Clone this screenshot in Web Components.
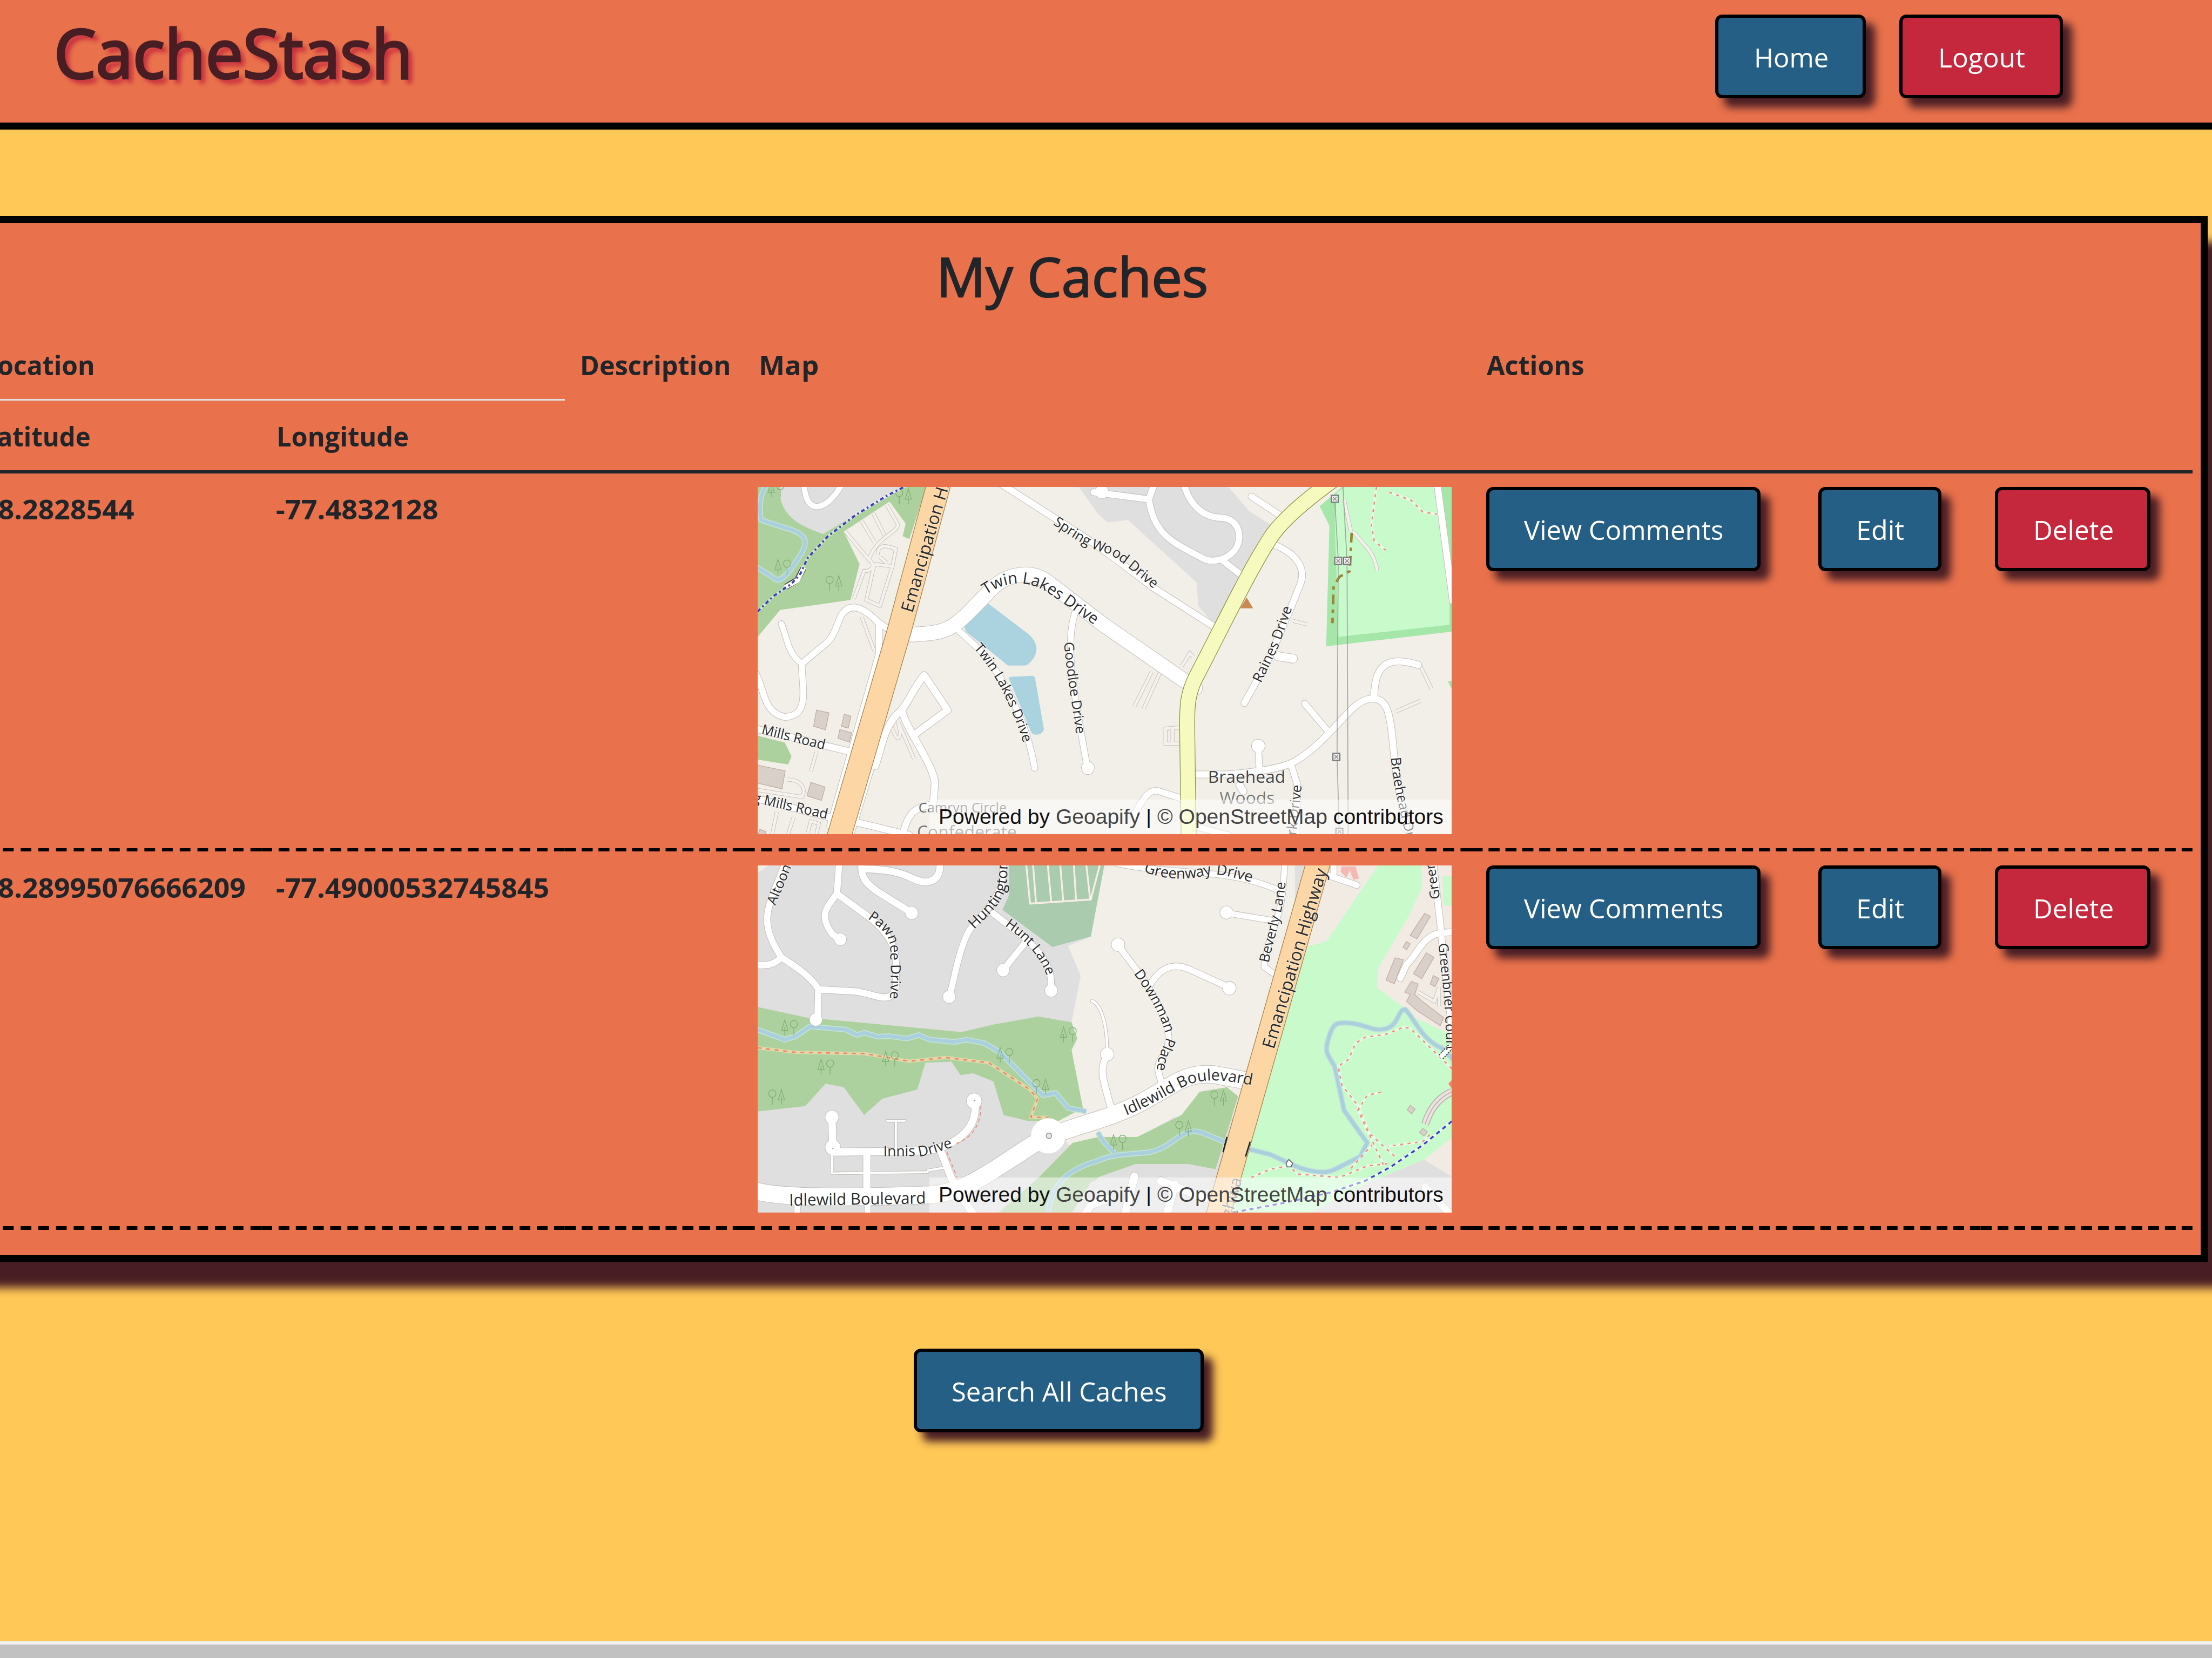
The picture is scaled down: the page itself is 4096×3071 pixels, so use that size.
<!DOCTYPE html>
<html lang="en">
<head>
<meta charset="utf-8">
<title>CacheStash</title>
<style>
  html { font-size: 73.142857px; }
  body { margin: 0; width: 4096px; height: 3071px; overflow: hidden; background: #ffc857; font-family: "Open Sans", "Noto Sans", sans-serif; color: #212529; }
</style>
</head>
<body>
<cache-app></cache-app>
<script>
const define = (name, html, after) => {
  const t = document.createElement('template');
  t.innerHTML = html;
  customElements.define(name, class extends HTMLElement {
    constructor() {
      super();
      this.attachShadow({ mode: 'open' }).appendChild(t.content.cloneNode(true));
    }
    connectedCallback() { if (after) after.call(this, this.shadowRoot); }
  });
};

/* Single line of text squeezed or stretched to an exact advance width (w, hundredths of a rem). */
define('fit-text', `
  <style>
    :host { display: inline-block; white-space: nowrap; text-align: left; }
    span { display: inline-block; transform-origin: 0 50%; }
  </style><span><slot></slot></span>`, function (root) {
  const w = this.getAttribute('w') * 0.73142857;
  const span = root.querySelector('span');
  this.style.width = w + 'px';
  const natural = span.offsetWidth;
  const exact = span.getBoundingClientRect().width || natural;
  span.style.transform = `scaleX(${w / exact})`;
});

define('stash-button', `
  <style>
    :host { display: inline-block; flex: none; }
    button { all: unset; box-sizing: border-box; display: flex; justify-content: center; align-items: center; width: 100%; height: 2.12rem;
      background: #255f85; color: #fff; border: 6.5px solid #000; border-radius: .18rem; font-size: .685rem; line-height: 1.054rem; padding: .02rem 0 0 .03rem;
      box-shadow: .22rem .22rem .22rem #481d24; }
    :host([danger]) button { background: #c5283d; }
  </style><button><slot></slot></button>`);

define('site-header', `
  <style>
    :host { display: flex; box-sizing: border-box; height: 240px; flex: none; background: #e9724c; border-bottom: 13px solid #000;
      justify-content: space-between; align-items: flex-start; padding: .37rem 3.78rem 0 1.37rem; }
    h1 { margin: .045rem 0 0; font-weight: 500; font-size: 1.7rem; line-height: 1.84rem; color: #481d24; -webkit-text-stroke: .035em #481d24; text-shadow: .12rem .12rem .12rem #c5283d; }
    nav { display: flex; gap: .85rem; }
  </style>
  <h1><fit-text w="908">CacheStash</fit-text></h1>
  <nav>
    <stash-button style="width:3.82rem"><fit-text w="189">Home</fit-text></stash-button>
    <stash-button danger style="width:4.13rem"><fit-text w="220">Logout</fit-text></stash-button>
  </nav>`);

/* ---------- map drawing ---------- */
const LW = 'translate(0 0) scale(.57398 .58673)', RW = 'scale(.58673 .58673)';
const tree = (x, y, flip) => `<g transform="translate(${x} ${y}) scale(${flip ? -1 : 1} 1)" fill="none" stroke="#7fae74" stroke-width="3">
  <path d="M-20,-30 L-34,15 H-6Z M-20,0 V36 M20,5 V36"/><circle cx="20" cy="-12" r="16"/></g>`;
const sq = (x, y) => `<rect x="${x - 15}" y="${y - 15}" width="30" height="30" fill="#eee" stroke="#777" stroke-width="5"/><path d="M${x - 8},${y - 8} l16,16 m0,-16 l-16,16" stroke="#777" stroke-width="3"/>`;
const bld = d => `<path d="${d}" fill="#d9d0c9" stroke="#c0aca3" stroke-width="3"/>`;
const foot = d => `<path d="${d}" fill="none" stroke="#fff" stroke-opacity=".45" stroke-width="12"/><path d="${d}" fill="none" stroke="#f3897a" stroke-width="6" stroke-dasharray="13 19"/>`;
const stream = d => `<path d="${d}" fill="none" stroke="#c5e2da" stroke-width="24" stroke-linejoin="round"/><path d="${d}" fill="none" stroke="#aad0de" stroke-width="16" stroke-linejoin="round"/>`;
const svc = d => `<path d="${d}" fill="none" stroke="#c9c3be" stroke-width="17"/><path d="${d}" fill="none" stroke="#f5f2ee" stroke-width="12"/>`;
const place = (o, s, c) => `<g transform="translate(${o[0]} ${o[1]}) ${s}">${c}</g>`;
let uid = 0;
const label = ([text, size, d, color]) => { const id = 'p' + (uid++);
  return `<path id="${id}" d="${d}" fill="none"/><text font-size="${size}" fill="${color || '#2b2b2b'}" stroke="#fff" stroke-opacity=".5" stroke-width="5" paint-order="stroke"><textPath href="#${id}">${text}</textPath></text>`; };

const MAPS = {
  lakes: {
    top: -21.8, bg: '#f2efe9',
    L: `<path fill="#add19e" d="M30,0 H786 L700,262 670,250 683,195 612,100 410,230 480,370 440,525 130,568 30,685Z"/>
      <path fill="#e0dfdf" d="M130,30 C120,120 160,190 320,240 C400,190 560,110 690,30Z"/>
      ${stream('M70,30 C40,70 35,120 45,180 L180,222 C262,250 250,290 200,360 C170,400 130,465 95,425 L20,380')}
      ${tree(140, 380)}${tree(368, 450, 1)}${tree(110, 45)}${tree(675, 75, 1)}
      <path fill="#add19e" d="M20,1108 L150,1140 L180,1200 L165,1235 L20,1212Z"/>
      ${bld('M290,1000 L345,1012 330,1085 277,1070Z')}${bld('M412,1018 L442,1026 430,1078 400,1070Z')}${bld('M393,1084 L445,1098 435,1138 384,1122Z')}
      ${bld('M20,1236 L152,1262 138,1340 20,1313Z')}${bld('M265,1312 L328,1332 312,1390 248,1370Z')}${bld('M40,1515 L68,1525 62,1545 30,1545Z')}
      ${svc('M420,232 L520,350 C560,250 640,240 650,200 L600,115 M490,185 L545,275 M540,150 L590,245 M520,350 C550,370 540,400 500,400 L455,520 M560,330 C560,280 600,290 640,305 L625,380 L570,550 L510,525 L545,370 L630,380 M570,340 L600,365')}
      ${svc('M490,600 L545,745 M620,1070 C640,1120 650,1140 660,1100 L650,1050 L720,1210 M290,1180 L265,1265 M160,1300 C220,1300 250,1340 225,1375 L30,1345 M115,1440 L95,1535 M190,1460 L165,1535 M250,1535 L265,1480 L300,1490 L290,1535')}
      <path fill="#aad3df" d="M1045,538 L1225,672 C1270,710 1275,760 1222,803 Q1215,808 1205,808 L1138,808 Q1130,806 1120,796 L950,662 C938,640 945,625 962,612Z M1138,862 Q1140,857 1150,856 L1240,852 Q1250,852 1254,862 L1293,1082 C1290,1106 1250,1114 1238,1098Z"/>`,
    R: `<path fill="#e0dfdf" d="M-90,30 L0,155 L40,190 L128,180 L425,450 L430,550 L500,630 L620,420 L750,205 L650,140 L555,30Z"/>
      <path fill="#a5e6a9" d="M955,120 L1060,30 H1540 V660 L983,725 L997,205Z"/><path fill="#c8facc" d="M1075,30 H1450 L1515,520 V632 L1036,684 L1020,180 L1030,60Z"/><path fill="#aadfae" d="M1508,876 L1540,870 V940Z"/>
      ${foot('M1200,37 L1178,200 L1190,270 L1240,310 M1255,60 L1350,95 L1400,145 L1460,155')}
      ${svc('M1060,90 L1090,230 M1100,230 L1160,300 Q1195,340 1203,400')}
      <path d="M1093,235 L1088,330 L1085,400 L1040,425 L1015,470 L1010,625" fill="none" stroke="#a08432" stroke-width="11" stroke-dasharray="42 22 14 22"/>
      ${svc('M230,835 L155,985 M265,840 L195,995 M360,810 L395,755 L410,770 M350,1075 L290,1080 V1145 H350 M320,1080 V1145 M840,615 L900,630 M1390,810 L1438,910 M1285,1005 L1390,960')}
      <path fill="#c98b53" d="M640,514 L668,561 H612Z"/>`,
    roads: [
      ['L', 27, 'M620,660 L560,620 C500,560 440,530 400,590 C370,650 370,690 310,730 L225,800 C225,900 265,1025 150,1030 C50,1010 60,900 20,840'],
      ['L', 25, 'M135,628 C165,700 160,750 225,800'], ['L', 27, 'M565,640 L565,760 L350,1500'], ['L', 24, 'M235,20 C240,170 340,140 405,20'],
      ['L', 30, 'M550,1240 C580,1150 590,1060 665,1000 C700,960 720,900 765,850 L868,1000 L730,1100'], ['L', 30, 'M550,1180 L440,1535'],
      ['L', 30, 'M665,1000 C690,1090 815,1250 812,1320 L805,1400'], ['L', 28, 'M440,1478 L700,1540 M670,1540 C690,1450 720,1420 800,1408'],
      ['L', 26, 'M920,660 L1010,740 C1120,860 1220,1060 1252,1250'], ['L', 26, 'M1430,580 C1385,720 1420,900 1485,1250'], ['Lc', 27, 1487, 1250],
      ['L', 28, 'M1090,15 L1370,190 C1500,270 1560,310 1773,470 L2060,650'], ['L', 28, 'M20,1080 L440,1180 M20,1380 L355,1465'],
      ['R', 27, 'M-20,60 L215,90 M243,20 L218,90 C240,250 330,280 460,350 C520,370 608,330 608,250 C605,190 560,170 530,170 C450,170 390,110 368,20 M530,350 L620,420'], ['Rc', 28, 15, 58],
      ['R', 26, 'M660,78 L800,170'], ['R', 27, 'M755,285 C870,330 895,400 870,460 L830,560 L740,770 L630,970'], ['R', 36, 'M775,768 L840,778'],
      ['R', 28, 'M400,1278 H560 C700,1265 800,1250 850,1220 C950,1160 1000,1090 1100,990 C1170,930 1230,940 1250,1010 C1275,1100 1270,1200 1290,1300 L1325,1500'], ['Rc', 18, 1325, 1508],
      ['R', 28, 'M1190,950 C1190,800 1250,765 1380,805'], ['R', 26, 'M890,972 L990,1090 M690,1160 L695,1255'], ['Rc', 28, 690, 1155],
      ['R', 26, 'M830,1230 L858,1320 L855,1560'], ['R', 26, 'M150,1460 C200,1370 220,1340 260,1350 L370,1385 M410,1500 L560,1540'], ['R', 30, 'M610,1325 L625,1350'],
      ['R', 28, 'M1462,20 L1530,530'],
      ['L', 62, 'M650,675 C860,675 880,650 950,590 L1050,490 C1110,420 1220,390 1300,440 L1560,635 L1960,905'],
      ['R', 62, 'M1010,10 C900,90 790,180 740,260 C650,400 560,590 420,860 C385,930 383,980 383,1070 L390,1560', '#f7fabf', '#8c9440'],
      ['L', 102, 'M836,0 L657,650 L385,1560', '#fcd6a4', '#a8824a'],
    ],
    overL: `<path d="M155,468 L205,438 L232,388" stroke="#444" stroke-width="26" fill="none"/><path d="M152,470 L207,440 L234,384" stroke="#fff" stroke-width="20" fill="none"/>
      <path d="M30,575 L100,508 L180,455 L220,410 L250,345 L340,250 L460,160 L600,75 L690,30" fill="none" stroke="#fff" stroke-opacity=".4" stroke-width="12"/><path d="M30,575 L100,508 L180,455 L220,410 L250,345 L340,250 L460,160 L600,75 L690,30" fill="none" stroke="#3a40b8" stroke-width="9" stroke-dasharray="17 12 8 12"/>`,
    overR: `<path d="M1020,90 L1035,355 L1030,1200 L1040,1550 M1055,30 L1073,355 L1078,1550" fill="none" stroke="#8a8a8a" stroke-opacity=".7" stroke-width="4"/>${sq(1020, 88)}${sq(1035, 356)}${sq(1073, 356)}${sq(1027, 1202)}${sq(1040, 1525)}`,
    labelsL: [['Emancipation Highway', 76, 'M713,583 L890,-20 L1000,-400'], ['Twin Lakes Drive', 69, 'M1038,503 C1120,445 1220,430 1320,500 C1400,550 1460,600 1560,660'],
      ['Twin Lakes Drive', 60, 'M983,733 C1080,840 1150,980 1210,1165'], ['Goodloe Drive', 60, 'M1382,708 C1390,820 1415,960 1440,1140'],
      ['Spring Wood Drive', 61, 'M1332,198 C1440,270 1500,310 1580,325 C1660,370 1720,440 1850,530'], ['Mills Road', 60, 'M45,1102 L400,1190'],
      ['g Mills Road', 60, 'M8,1397 L400,1485'], ['Camryn Circle', 60, 'M740,1443 H1200', '#666'], ['Confederate', 76, 'M733,1555 H1300', '#777']],
    labelsR: [['Raines Drive', 61, 'M702,885 L780,720 L850,520'], ['Braehead', 74, 'M473,1314 H900', '#444'], ['Woods', 74, 'M523,1405 H900', '#777'],
      ['Braehead Drive', 60, 'M1262,1205 C1270,1300 1280,1350 1330,1560'], ['ark Drive', 60, 'M850,1575 L880,1300']],
  },
  idlewild: {
    top: -19.4, bg: '#e0dfdf',
    L: `<path fill="#f2efe9" d="M1540,30 L1500,340 L1400,380 L1455,510 L1415,710 L1440,780 L1415,830 L1470,1120 H2400 V30Z"/>
      <path fill="#f2efe9" d="M20,70 L85,30 H20Z M1350,1140 L1420,1095 L1480,1080 L1540,1110 L1540,1140 L1900,1040 L1980,1010 L1850,1130 L1704,1210 L1533,1210 L1400,1240Z"/>
      <path fill="#aacbae" d="M1140,30 L1140,160 L1110,225 L1330,385 L1500,340 L1560,30Z"/>
      <path d="M1215,30 L1232,198 L1500,180 L1540,30 M1245,30 L1258,192 M1310,30 L1325,190 M1365,30 L1378,186 M1425,30 L1435,184 M1480,30 L1497,180" fill="none" stroke="#f6eee6" stroke-width="8"/>
      <path fill="#add19e" d="M20,642 L250,690 L930,752 L1070,720 L1270,685 L1415,710 L1440,780 L1415,830 L1465,1080 L1350,1140 L1220,1135 L1115,1110 L1070,965 L980,930 L925,938 L885,880 L770,885 L735,1000 L580,1040 L500,1110 L410,990 L330,975 L240,1072 L20,1096Z"/>
      <path fill="#add19e" d="M1060,1560 L1270,1380 L1420,1230 L1533,1205 H1704 L1900,1110 L1980,1010 L2100,990 L2150,1030 L2050,1345 L1920,1322 L1696,1322 L1500,1400 L1400,1560Z"/>
      ${stream('M20,738 L150,785 L200,770 L260,728 L420,742 L470,765 L500,755 L560,772 L610,770 L690,780 L740,765 L790,785 L900,795 L950,785 L1030,800 L1100,840 L1200,940 L1290,1025 L1345,1015 L1400,1080 L1480,1095')}
      ${stream('M1310,1540 C1330,1400 1400,1345 1530,1308 C1600,1275 1700,1280 1760,1270 C1870,1250 1900,1150 2000,1190 L2100,1230')}${stream('M1530,1185 L1560,1230 L1605,1275')}
      <path d="M30,820 L200,840 L500,845 L700,878 L860,862 L1050,885 L1230,1000 L1265,1040 L1235,1120 L1310,1120" fill="none" stroke="#dfd9a8" stroke-width="14"/>
      <path d="M30,820 L200,840 L500,845 L700,878 L860,862 L1050,885 L1230,1000 L1265,1040 L1235,1120 L1310,1120" fill="none" stroke="#f0836c" stroke-width="6" stroke-dasharray="17 21"/>
      ${tree(170, 730)}${tree(615, 865)}${tree(330, 900)}${tree(115, 1030, 1)}${tree(1400, 760)}${tree(1120, 850)}${tree(1280, 985, 1)}${tree(2065, 1035, 1)}${tree(1910, 1165, 1)}${tree(1620, 1225)}`,
    R: `<path fill="#f1ebe4" d="M1000,30 H1540 V1560 H1000 L880,400Z"/>
      <path fill="#c8facc" d="M1210,30 H1395 V130 L1340,250 L1205,480 L1203,560 L1310,640 L1365,690 L1540,770 V1195 L1410,1300 L1170,1400 L900,1560 H470 L905,382 L985,360 L1100,190Z M1485,80 H1540 V210 L1490,205Z"/>
      <path fill="#e0dfdf" d="M1170,1400 L1405,1303 L1540,1385 V1560 H860Z M0,1378 L160,1322 H390 L510,1345 L460,1560 H-100Z"/>
      ${stream('M600,1245 L740,1280 L860,1335 C930,1360 990,1365 1030,1340 L1130,1290 L1160,1230 L1060,1090 L1020,900 C980,840 980,830 990,790 C1010,720 1020,710 1070,712 C1150,715 1180,750 1230,740 C1300,730 1290,650 1325,655 C1360,690 1400,790 1480,820 L1540,880')}
      ${foot('M1525,910 L1350,740 L1320,730 L1240,762 L1150,775 L1110,800 L1080,870 L1035,900 L1050,980 L1120,1070 L1170,1190 L1280,1290')}${foot('M1220,1012 L1160,1025 L1120,1090 L1230,1325 M660,1380 L740,1345 L820,1330 L860,1365 L1040,1380 L1160,1330 L1250,1320 M1090,1340 L1180,1240 M1430,1195 L1400,1225 L1250,1245')}
      ${bld('M1408,240 L1433,252 L1375,350 L1345,335Z')}${bld('M1330,362 L1346,372 L1330,397 L1314,386Z')}${bld('M1280,432 L1316,440 L1277,543 L1241,528Z')}${bld('M1415,410 L1448,430 L1395,522 L1360,500Z')}${bld('M1350,534 L1380,545 L1365,590 L1392,615 L1490,690 L1475,725 L1375,660 L1330,620 L1345,590 L1322,580Z')}${bld('M1445,508 L1470,522 L1452,556 L1432,545Z')}${bld('M1345,1068 L1367,1085 L1352,1105 L1333,1088Z')}${bld('M1400,1168 L1420,1183 L1405,1200 L1385,1185Z')}
      <path d="M1045,60 L1050,37 H1110 L1125,90 L1100,95 L1085,55 L1070,85Z" fill="#f4b9b5"/>
      ${svc('M1380,580 L1450,620 L1470,560 V640')}
      <path d="M1410,1150 C1430,1090 1460,1040 1525,1010" fill="none" stroke="#bbb0aa" stroke-width="34"/><path d="M1410,1150 C1430,1090 1460,1040 1525,1010" fill="none" stroke="#e9e4e0" stroke-width="26"/>
      <path d="M1410,1150 C1430,1090 1460,1040 1525,1010" fill="none" stroke="#bbb0aa" stroke-width="4"/>`,
    roads: [
      ['L', 28, 'M150,30 C110,130 75,200 72,260 C70,330 110,390 135,430 C200,470 260,510 298,565 L295,690 M135,430 C100,465 70,465 20,463 M298,568 L470,578 C540,590 570,610 610,600 C650,580 640,540 640,480 C645,400 620,330 520,255 L380,155 L390,20 M380,155 C330,220 300,250 360,330 L390,350'],
      ['Lc', 27, 287, 698], ['Lc', 26, 395, 352], ['L', 30, 'M490,20 C480,120 540,130 710,238 M490,48 C700,50 700,100 770,105 C830,100 835,60 835,20'], ['Lc', 27, 710, 238],
      ['L', 27, 'M1115,20 L1105,120 C1060,230 980,270 950,340 C910,430 900,520 875,600 M1070,240 L1220,355 C1300,430 1330,480 1325,570 M1215,360 L1113,485'], ['Lc', 27, 875, 600], ['Lc', 27, 1325, 573], ['Lc', 27, 1113, 485],
      ['L', 9, 'M640,1260 V1135 M600,1135 H680 M358,1270 V1362 L780,1357 M780,1350 L850,1338'],
      ['L', 32, 'M358,1120 L362,1250 M370,1270 L780,1265 C860,1250 1000,1200 990,1060 M512,1270 V1440 M840,1270 L900,1420'], ['Lc', 29, 358, 1120], ['Lc', 33, 362, 1250], ['Lc', 33, 985, 1050],
      ['L', 26, 'M205,1490 V1560 M515,1490 V1560'],  ['L', 32, 'M920,1450 L990,1550 M1470,1545 L1500,1500 L1580,1470'],
      ['L', 11, 'M1505,618 C1540,630 1570,700 1572,830'],
      ['R', 28, 'M38,848 C0,920 20,950 60,1100'], ['Rc', 28, 38, 848], ['R', 26, 'M85,378 L200,530 C260,640 340,760 285,850 C240,900 260,930 280,990 M225,545 C270,470 330,450 400,485 L565,560'], ['Rc', 28, 85, 375], ['Rc', 28, 565, 563],
      ['R', 24, 'M80,25 C300,75 560,40 775,140 M805,20 L795,150 C780,280 730,340 715,470 L770,510 M553,238 L745,270'], ['Rc', 27, 553, 236],
      ['R', 26, 'M990,75 L1115,118 M1015,20 V70'], ['R', 27, 'M1445,20 L1480,325 L1530,320 M1480,325 C1400,330 1370,430 1330,460 L1303,520 M1480,340 L1530,780'],
      ['R', 34, 'M155,1375 L110,1560 M270,1395 L460,1470 M330,1410 L290,1560'], ['R', 30, 'M1410,1420 L1520,1540'],
      ['Lc', 68, 1312, 1200],
      ['L', 74, 'M0,1430 C100,1475 500,1465 800,1455 C950,1440 1050,1360 1240,1240 L1330,1195 L1568,1120 C1700,1075 1750,1040 1840,990 C1920,940 1980,930 2040,935 L2200,965'],
      ['R', 100, 'M958,-10 L510,1565', '#fcd6a4', '#a8824a'],
    ],
    overL: `<circle cx="1312" cy="1200" r="76" fill="#fff"/><circle cx="1315" cy="1200" r="12" fill="#e8e8e8" stroke="#999" stroke-width="4"/><circle cx="987" cy="1048" r="3" fill="#b77"/><circle cx="362" cy="1254" r="3" fill="#999"/>
      <path d="M1015,1070 C1015,1150 980,1210 900,1235 M865,1270 L910,1380" fill="none" stroke="#f3897a" stroke-width="4" stroke-dasharray="16 12"/>`,
    overR: `<path d="M585,1530 L800,1490 L1000,1445 L1150,1395 L1260,1335 L1400,1240 L1540,1125" fill="none" stroke="#fff" stroke-opacity=".5" stroke-width="12"/><path d="M585,1530 L800,1490 L1000,1445 L1150,1395 L1260,1335 L1400,1240 L1540,1125" fill="none" stroke="#3a40c8" stroke-width="8" stroke-dasharray="18 16"/>
      <path d="M555,1205 L538,1270 M655,1225 L635,1290" stroke="#222" stroke-width="6"/><path d="M822,1302 L838,1318 L832,1334 H814 L810,1318Z" fill="#fff" stroke="#666" stroke-width="4"/>
      <path d="M1478,860 L1520,815" stroke="#444" stroke-width="28" stroke-dasharray="6 5"/><path d="M1476,862 L1522,813" stroke="#fff" stroke-width="18"/>
      <path d="M1525,960 L1510,975 L1525,995Z" fill="#f08070"/>`,
    labelsL: [['Altoona', 60, 'M108,207 L200,-10'], ['Pawnee Drive', 61, 'M515,262 C600,320 620,350 615,420 C620,480 618,540 612,640'], ['Huntington', 66, 'M985,310 C1080,220 1120,180 1130,100 L1137,-60'],
      ['Hunt Lane', 60, 'M1120,293 C1200,350 1270,410 1310,520'], ['Innis Drive', 63, 'M585,1288 L760,1287 C820,1275 860,1255 940,1235'], ['Idlewild Boulevard', 70, 'M170,1502 L800,1492']],
    labelsR: [['Greenway Drive', 64, 'M195,60 C330,110 430,85 480,72 C540,70 580,85 700,115'], ['Beverly Lane', 60, 'M735,455 C760,330 800,240 812,60'], ['Emancipation Highway', 76, 'M757,828 L1010,-20'],
      ['Downman Place', 61, 'M152,500 C220,590 290,720 292,780 C270,840 250,870 250,960'], ['Idlewild Boulevard', 67, 'M120,1112 C250,1060 330,1000 400,975 C480,950 560,960 700,990'],
      ['Greenbrier', 58, 'M1474,176 L1450,20 L1440,-200', ], ['Greenbrier Court', 58, 'M1468,370 C1475,480 1500,600 1502,860'], ['ghway', 72, 'M575,1560 L625,1370', '#777']],
  },
};

define('map-view', `
  <style>
    :host { display: grid; width: 17.573rem; height: 8.787rem; overflow: hidden; font-weight: 400; }
    svg, .credit { grid-area: 1 / 1; }
    svg { width: 100%; height: 100%; display: block; }
    .credit { align-self: end; justify-self: end; box-sizing: border-box; width: 13.23rem; height: .88rem; padding: 0 0 0 .23rem; background: rgba(255,255,255,.5); z-index: 1;
      font: .535rem/.87rem "Liberation Sans", Arial, sans-serif; color: #111; }
    a { color: #444; }
  </style>
  <div id="m" style="display:contents"></div>
  <div class="credit"><fit-text w="1278">Powered by <a>Geoapify</a> | <a>©&nbsp;OpenStreetMap</a> contributors</fit-text></div>`, function (root) {
  const m = MAPS[this.getAttribute('place')];
  const oL = [-17.5, m.top], oR = [862.5, m.top];
  const at = (k, c) => k[0] === 'L' ? place(oL, LW, c) : place(oR, RW, c);
  const road = (r, extra, col) => r[0][1] === 'c' ? at(r[0], `<circle cx="${r[2]}" cy="${r[3]}" r="${r[1] + extra / 2}" fill="${col}"/>`)
    : at(r[0], `<path d="${r[2]}" fill="none" stroke="${col}" stroke-width="${r[1] + extra}" stroke-linecap="round" stroke-linejoin="round"/>`);
  const minor = m.roads.filter(r => r[0][1] === 'c' || !r[3]), major = m.roads.filter(r => r[0][1] !== 'c' && r[3]);
  root.getElementById('m').innerHTML = `<svg viewBox="0 0 1757.3 878.7" preserveAspectRatio="none" font-family="'Open Sans','Noto Sans',sans-serif">
    <rect width="1758" height="879" fill="${m.bg}"/>
    ${at('L', m.L)}${at('R', m.R)}
    ${minor.map(r => road(r, 5, '#c4c0bc')).join('')}${minor.map(r => road(r, 0, '#fff')).join('')}
    ${major.map(r => road(r, 6, r[4]) + road(r, 0, r[3])).join('')}
    ${at('L', m.overL)}${at('R', m.overR)}
    ${at('L', m.labelsL.map(label).join(''))}${at('R', m.labelsR.map(label).join(''))}</svg>`;
});

/* Dashed underline: one segment per table column, each beginning and ending on a dash. */
define('dash-rule', `
  <style>
    :host { display: grid; grid-template-columns: var(--cols); height: .09rem; }
    i { background: linear-gradient(90deg, #000 .275rem, transparent .275rem) 0 0 / calc((100% - .275rem) / var(--k)) 100% repeat-x; }
  </style>
  <i style="--k:16"></i><i style="--k:17"></i><i style="--k:10"></i><i style="--k:41"></i><i style="--k:19"></i><i style="--k:10"></i><i style="--k:12"></i>`);

define('cache-row', `
  <style>
    :host { display: block; }
    .cells { display: grid; grid-template-columns: var(--cols); height: 9.489rem; box-sizing: border-box; padding-top: .351rem; font-size: .685rem; line-height: 1.054rem; font-weight: 700; }
    .cells > * { padding-left: .351rem; }
    .cells > .num { padding: .025rem 0 0 .365rem; }
    .cells > .btn { padding-left: .365rem; font-weight: 400; }
  </style>
  <div class="cells">
    <div class="num"><slot name="lat"></slot></div><div class="num"><slot name="lng"></slot></div><div></div>
    <div><slot name="map"></slot></div>
    <div class="btn"><stash-button style="width:6.94rem"><fit-text w="505">View Comments</fit-text></stash-button></div>
    <div class="btn"><stash-button style="width:3.12rem"><fit-text w="122">Edit</fit-text></stash-button></div>
    <div class="btn"><stash-button danger style="width:3.94rem"><fit-text w="204">Delete</fit-text></stash-button></div>
  </div>
  <dash-rule></dash-rule>`);

define('cache-table', `
  <style>
    :host { display: block; --cols: 7.44rem 7.68rem 4.53rem 18.43rem 8.4rem 4.48rem 5.365rem; }
    .head { display: grid; box-sizing: border-box; height: 3.651rem; grid-template-columns: var(--cols); grid-template-rows: 1.806rem 1fr; border-bottom: 6.6px solid #212529; font-size: .685rem; font-weight: 700; line-height: 1.054rem; }
    .head > div { padding: .37rem 0 0 .375rem; }
    .loc { grid-column: 1 / 3; border-bottom: 3px solid #dee2e6; }
    .lat { grid-area: 2 / 1; } .lng { grid-area: 2 / 2; }
    .desc { grid-area: 1 / 3; } .map { grid-area: 1 / 4; } .act { grid-area: 1 / 5 / 2 / 8; }
  </style>
  <div class="head">
    <div class="loc"><fit-text w="284">Location</fit-text></div>
    <div class="desc"><fit-text w="382">Description</fit-text></div>
    <div class="map"><fit-text w="152">Map</fit-text></div>
    <div class="act"><fit-text w="247">Actions</fit-text></div>
    <div class="lat"><fit-text w="273">Latitude</fit-text></div>
    <div class="lng"><fit-text w="335">Longitude</fit-text></div>
  </div>
  <cache-row><fit-text slot="lat" w="385">38.2828544</fit-text><fit-text slot="lng" w="411">-77.4832128</fit-text><map-view slot="map" place="lakes"></map-view></cache-row>
  <cache-row><fit-text slot="lat" w="667">38.28995076666209</fit-text><fit-text slot="lng" w="692">-77.49000532745845</fit-text><map-view slot="map" place="idlewild"></map-view></cache-row>`);

define('cache-app', `
  <style>
    :host { display: flex; flex-direction: column; width: 56rem; height: 3071px; overflow: hidden; background: #ffc857; }
    .panel { flex: none; box-sizing: border-box; width: 57.105rem; height: 26.49rem; margin: 160px 0 0 -1.21rem; padding: 0 .215rem; background: #e9724c; border: 13px solid #000; box-shadow: .66rem .66rem .22rem #481d24; }
    h2 { margin: 0; height: 2.69rem; box-sizing: border-box; padding: .45rem .4rem 0 0; text-align: center; font-weight: 500; font-size: 1.375rem; line-height: 1.8rem; -webkit-text-stroke: .022em #212529; }
    .more { flex: 1; padding: 2.193rem 0 0 23.135rem; }
    .bar { flex: none; height: .34rem; background: #c1c1c1; border-top: 6px solid #f1f1f1; }
  </style>
  <site-header></site-header>
  <section class="panel"><h2><fit-text w="688">My Caches</fit-text></h2><cache-table></cache-table></section>
  <div class="more"><stash-button style="width:7.34rem"><fit-text w="545">Search All Caches</fit-text></stash-button></div>
  <div class="bar"></div>`);
</script>
</body>
</html>
